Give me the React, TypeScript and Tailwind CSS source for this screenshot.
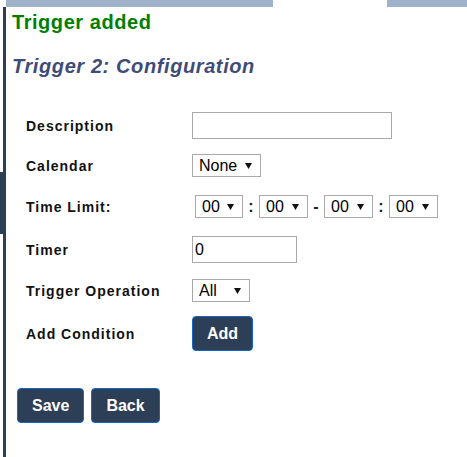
const DARK = 'bg-[#2d3e57]';

type Row = { label: string; top: string; height: string; control: React.ReactNode };

function Arrow() {
  return (
    <svg width="7" height="6" viewBox="0 0 7 6" aria-hidden>
      <polygon points="0,0 7,0 3.5,6" fill="#111" />
    </svg>
  );
}

function FakeSelect({ value, width }: { value: string; width: string }) {
  return (
    <div
      className={`flex h-[23px] ${width} items-center justify-between border border-[#a9a9a9] bg-white pl-[6px] pr-[8px] text-[16px] leading-none text-black`}
    >
      <span>{value}</span>
      <Arrow />
    </div>
  );
}

function TextBox({ value, width }: { value?: string; width: string }) {
  return (
    <div
      className={`flex h-[27px] ${width} items-center border border-[#a9a9a9] bg-white pl-[2px] text-[16px] leading-none text-black`}
    >
      {value}
    </div>
  );
}

function DarkButton({ children }: { children: React.ReactNode }) {
  return (
    <button
      className={`h-[35px] rounded-[4px] border border-[#1767c4] ${DARK} px-[14px] text-[16px] font-bold leading-none text-white`}
    >
      {children}
    </button>
  );
}

function Sep({ char }: { char: string }) {
  return <span className="w-[16px] text-center text-[16px] font-bold leading-none text-[#222]">{char}</span>;
}

const rows: Row[] = [
  { label: 'Description', top: 'mt-0', height: 'h-[27px]', control: <TextBox width="w-[200px]" /> },
  { label: 'Calendar', top: 'mt-[15px]', height: 'h-[23px]', control: <FakeSelect value="None" width="w-[69px]" /> },
  {
    label: 'Time Limit:',
    top: 'mt-[18px]',
    height: 'h-[23px]',
    control: (
      <div className="ml-[3px] flex items-center">
        <FakeSelect value="00" width="w-[48px]" />
        <Sep char=":" />
        <FakeSelect value="00" width="w-[49px]" />
        <Sep char="-" />
        <FakeSelect value="00" width="w-[49px]" />
        <Sep char=":" />
        <FakeSelect value="00" width="w-[49px]" />
      </div>
    ),
  },
  { label: 'Timer', top: 'mt-[18px]', height: 'h-[27px]', control: <TextBox value="0" width="w-[105px]" /> },
  { label: 'Trigger Operation', top: 'mt-[16px]', height: 'h-[23px]', control: <FakeSelect value="All" width="w-[58px]" /> },
  { label: 'Add Condition', top: 'mt-[14px]', height: 'h-[35px]', control: <DarkButton>Add</DarkButton> },
];

export default function App() {
  return (
    <div className="flex min-h-[457px] bg-white font-['Liberation_Sans',Arial,sans-serif]">
      {/* edge of the sidebar behind */}
      <div className="w-[3px]">
        <div className={`mt-[172px] h-[62px] ${DARK}`} />
      </div>

      <div className="flex flex-1 flex-col">
        <div className="flex h-[7px] pl-[3px]">
          <div className="w-[267px] bg-[#a0b1ca]" />
          <div className="w-[114px]" />
          <div className="flex-1 bg-[#a0b1ca]" />
        </div>

        <div className="flex-1 border-l-[3px] border-[#2d3e57] pl-[6px]">
          <h1 className="mt-[4px] text-[20px] font-bold leading-[23px] tracking-[0.55px] text-[#008000]">
            Trigger added
          </h1>
          <h2 className="mt-[21px] text-[20px] font-bold italic leading-[23px] tracking-[0.6px] text-[#404c78]">
            Trigger 2: Configuration
          </h2>

          <div className="mt-[34px] pl-[14px]">
            {rows.map(row => (
              <div key={row.label} className={`flex items-center ${row.top} ${row.height}`}>
                <span className="w-[166px] text-[14px] font-bold leading-4 tracking-[1px] text-[#111]">
                  {row.label}
                </span>
                {row.control}
              </div>
            ))}
          </div>

          <div className="ml-[5px] mt-[37px] flex gap-[7px]">
            <DarkButton>Save</DarkButton>
            <DarkButton>Back</DarkButton>
          </div>
        </div>
      </div>
    </div>
  );
}
